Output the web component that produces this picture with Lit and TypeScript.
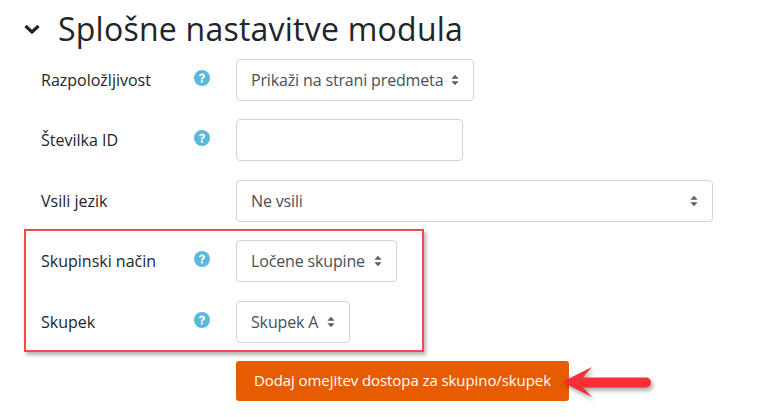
import { LitElement, css, html } from 'lit';
import { customElement } from 'lit/decorators.js';

const help = html`<svg class="help" viewBox="0 0 16 16" aria-hidden="true">
  <circle cx="8" cy="8" r="8" fill="#5bb9de"></circle>
  <path d="M5.100 6.100C5.200 4.500 6.400 3.500 8.100 3.500c1.700 0 3 1 3 2.500 0 1.200-.7 1.800-1.500 2.300-.6.4-.8.6-.8 1.200H7c0-1.200.3-1.800 1.100-2.300.6-.4 1-.7 1-1.200 0-.5-.4-.8-1-.8-.7 0-1.100.4-1.200 1z" fill="#fff"></path>
  <rect x="6.900" y="10.300" width="2" height="2.100" rx=".4" fill="#fff"></rect>
</svg>`;

const carets = html`<svg class="carets" viewBox="0 0 8 12" aria-hidden="true">
  <path d="M4 .8 7.600 4.800H.4zM4 11.200.4 7.200h7.200z" fill="#5a6066"></path>
</svg>`;

const rows = [
  { label: 'Razpoložljivost', help: true, value: 'Prikaži na strani predmeta', width: 238 },
  { label: 'Številka ID', help: true, input: true, width: 227 },
  { label: 'Vsili jezik', help: false, value: 'Ne vsili', width: 477 },
  { label: 'Skupinski način', help: true, value: 'Ločene skupine', width: 161 },
  { label: 'Skupek', help: true, value: 'Skupek A', width: 114 },
];

@customElement('app-root')
export class AppRoot extends LitElement {
  static styles = css`
    :host {
      display: block;
      position: relative;
      width: 777px;
      height: 417px;
      overflow: hidden;
      background: #fff;
      font-family: 'Open Sans', sans-serif;
      font-size: 16px;
      color: #373a3c;
    }
    .page {
      padding-left: 23px;
    }
    .heading {
      display: flex;
      align-items: center;
      height: 58.900px;
      gap: 17px;
    }
    .chevron {
      width: 18px;
      height: 12px;
      flex: none;
    }
    h2 {
      margin: 0;
      font-size: 32px;
      letter-spacing: 0.24px;
      font-weight: 400;
      color: #212529;
      position: relative;
      top: -1px;
    }
    .rows {
      display: flex;
      flex-direction: column;
      gap: 18.500px;
      padding-left: 18px;
    }
    .row {
      display: grid;
      grid-template-columns: 153px 42px 1fr;
      height: 42px;
      align-items: center;
    }
    .label {
      color: #212529;
    }
    .help {
      width: 16px;
      height: 16px;
      display: block;
      position: relative;
      top: -2px;
    }
    .field {
      box-sizing: border-box;
      height: 42px;
      border: 1px solid #ced4da;
      border-radius: 4px;
      display: flex;
      align-items: center;
      justify-content: space-between;
      padding: 0 14px 0 14px;
      color: #495057;
      letter-spacing: -0.15px;
      background: #fff;
    }
    .carets {
      width: 8px;
      height: 12px;
      flex: none;
    }
    .action {
      margin: 18.100px 0 0 213px;
      box-sizing: border-box;
      width: 333px;
      height: 40px;
      padding-bottom: 1px;
      display: flex;
      align-items: center;
      justify-content: center;
      background: #e65c00;
      color: #fff;
      border-radius: 3px;
      font-size: 15px;
      letter-spacing: -0.08px;
    }
    .outline {
      position: absolute;
      left: 24px;
      top: 229px;
      width: 400px;
      height: 123px;
      box-sizing: border-box;
      border: 2px solid #f9474e;
      box-shadow: 2px 3px 4px rgba(0, 0, 0, 0.3);
    }
    .arrow {
      position: absolute;
      left: 560px;
      top: 362px;
      width: 100px;
      height: 40px;
      overflow: visible;
      filter: drop-shadow(2px 3px 2px rgba(0, 0, 0, 0.35));
    }
  `;

  render() {
    return html`
      <div class="page">
        <div class="heading">
          <svg class="chevron" viewBox="0 0 18 12" aria-hidden="true">
            <path d="M2.500 3 9 9l6.500-6" fill="none" stroke="#212529" stroke-width="3.200"></path>
          </svg>
          <h2>Splošne nastavitve modula</h2>
        </div>
        <div class="rows">
          ${rows.map(
            (r) => html`
              <div class="row">
                <span class="label">${r.label}</span>
                <span>${r.help ? help : ''}</span>
                <div class="field" style="width: ${r.width}px">
                  ${r.input ? '' : html`<span>${r.value}</span>${carets}`}
                </div>
              </div>
            `,
          )}
        </div>
        <div class="action">Dodaj omejitev dostopa za skupino/skupek</div>
      </div>
      <div class="outline"></div>
      <svg class="arrow" viewBox="0 0 100 40" aria-hidden="true">
        <path d="M2 20 32 5 23 15.500H86a5 5 0 0 1 0 10H23L32 35z" fill="#f62f35"></path>
      </svg>
    `;
  }
}
